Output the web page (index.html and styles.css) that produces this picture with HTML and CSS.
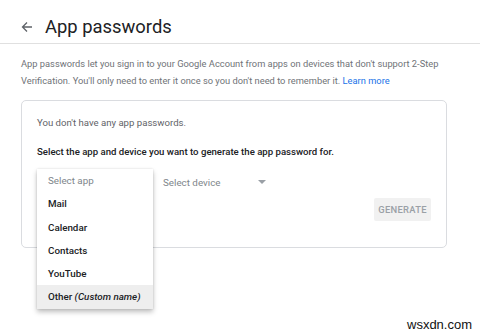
FILE: index.html
```html
<!DOCTYPE html>
<html>
<head>
<meta charset="utf-8">
<link rel="stylesheet" href="styles.css">
</head>
<body>
<header class="topbar">
  <svg class="back" width="12" height="12" viewBox="0 0 12 12"><path d="M11 6H2M6 1.5L1.5 6L6 10.5" fill="none" stroke="#5f6368" stroke-width="1.3"/></svg>
  <h1 class="title">App passwords</h1>
</header>
<main class="content">
  <p class="intro">App passwords let you sign in to your Google Account from apps on devices that don't support 2-Step Verification. You'll only need to enter it once so you don't need to remember it. <a class="link">Learn more</a></p>
  <section class="card">
    <p class="none">You don't have any app passwords.</p>
    <p class="instr">Select the app and device you want to generate the app password for.</p>
    <div class="selects">
      <div class="app-slot">
        <ul class="menu">
          <li class="item placeholder">Select app</li>
          <li class="item">Mail</li>
          <li class="item">Calendar</li>
          <li class="item">Contacts</li>
          <li class="item">YouTube</li>
          <li class="item active">Other <em>(Custom name)</em></li>
        </ul>
      </div>
      <div class="device">
        <span>Select device</span>
        <span class="caret"></span>
      </div>
    </div>
    <div class="actions">
      <button class="gen">GENERATE</button>
    </div>
  </section>
</main>
<div class="watermark">wsxdn.com</div>
</body>
</html>
```
FILE: styles.css
```css
html, body { margin: 0; padding: 0; background: #fff; }
body { width: 480px; height: 334px; overflow: hidden; position: relative; font-family: Roboto, "Liberation Sans", sans-serif; color: #3c4043; }
.topbar { border-bottom: 1px solid #e0e0e0; display: flex; align-items: center; padding-left: 21px; padding-top: 10px; box-sizing: border-box; height: 44px; }
.back { margin-right: 12px; margin-top: 1px; }
.title { margin: 0; font-family: Roboto, "Liberation Sans", sans-serif; font-weight: 400; font-size: 18.4px; color: #202124; }
.content { padding: 11px 22px 0 21px; }
.intro { margin: 0; font-size: 9.3px; line-height: 17px; color: #6f7377; }
.link { color: #1a73e8; }
.card { margin-top: 11px; width: 426px; height: 148px; border: 1px solid #dadce0; border-radius: 5px; padding: 0 15px; box-sizing: border-box; position: relative; }
.none { margin: 15px 0 0; font-size: 9.6px; line-height: 14px; color: #5f6368; }
.instr { margin: 15px 0 0; font-size: 9.6px; line-height: 14px; color: #202124; font-weight: 500; }
.selects { display: flex; margin-top: 11px; height: 28px; }
.app-slot { width: 116px; position: relative; }
.menu { position: absolute; left: 0; top: -1px; width: 116px; margin: 0; padding: 0; list-style: none; background: #fff; box-shadow: 0 3px 5px rgba(0,0,0,0.25), 0 0 2px rgba(0,0,0,0.12); z-index: 2; }
.item { height: 23.3px; line-height: 23px; padding-left: 11px; font-size: 9.8px; color: #202124; font-weight: 500; }
.item.placeholder { color: #80868b; font-weight: 400; }
.item.active { background: #eeeeee; }
.item em { font-weight: 500; }
.device { margin-left: 10px; display: flex; align-items: center; height: 24px; font-size: 9.8px; color: #80868b; }
.caret { margin-left: 38px; width: 0; height: 0; border-left: 4px solid transparent; border-right: 4px solid transparent; border-top: 4px solid #9aa0a6; }
.actions { display: flex; justify-content: flex-end; margin-top: 0; }
.gen { width: 57px; height: 23px; border: none; background: #f1f1f1; color: #9aa0a6; font-family: Roboto, "Liberation Sans", sans-serif; font-size: 9.4px; font-weight: 500; letter-spacing: 0.3px; padding: 0; border-radius: 2px; }
.watermark { position: absolute; left: 407px; top: 317px; font-family: "Liberation Sans", Arial, sans-serif; font-size: 13px; color: #111; }
```
